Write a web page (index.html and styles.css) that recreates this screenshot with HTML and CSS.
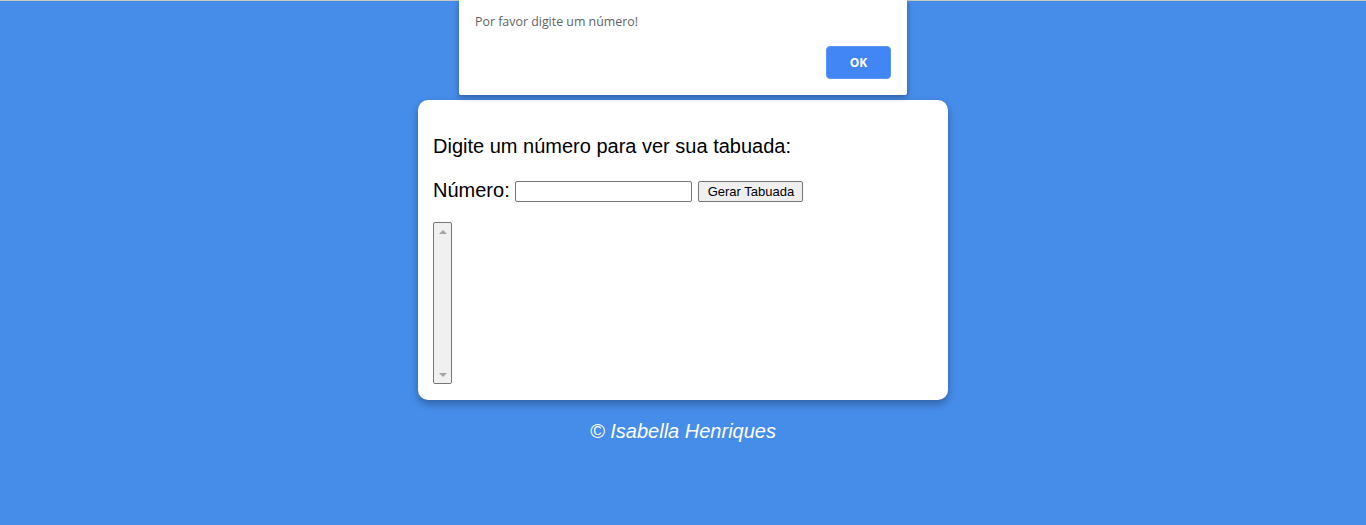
FILE: index.html
```html
<!DOCTYPE html>
<html lang="pt-BR">
<head>
<meta charset="utf-8">
<title>Tabuada</title>
<link rel="stylesheet" href="styles.css">
</head>
<body>
<div class="page">
  <main class="card">
    <p class="lead">Digite um número para ver sua tabuada:</p>
    <p class="row">Número: <input type="text" class="num"> <button class="gen">Gerar Tabuada</button></p>
    <div class="list">
      <span class="arrow up"></span>
      <span class="arrow down"></span>
    </div>
  </main>
  <footer class="foot">© Isabella Henriques</footer>
</div>
<div class="alert">
  <p class="msg">Por favor digite um número!</p>
  <div class="actions"><button class="ok">OK</button></div>
</div>
</body>
</html>
```
FILE: styles.css
```css
html, body { margin: 0; padding: 0; }
body {
  background: #468dea;
  border-top: 1px solid #c8c8c8;
  height: 524px;
  font-family: "Liberation Sans", Arial, sans-serif;
  overflow: hidden;
}
.page {
  display: flex;
  flex-direction: column;
  align-items: center;
  padding-top: 99px;
}
.card {
  box-sizing: border-box;
  width: 530px;
  background: #fff;
  border-radius: 10px;
  box-shadow: 0 4px 8px rgba(0,0,0,0.3);
  padding: 15px 15px 16px;
  height: 300px;
}
.lead {
  margin: 20px 0 0;
  font-size: 20px;
  line-height: 23px;
  color: #000;
}
.row {
  margin: 20px 0 0;
  font-size: 20px;
  line-height: 23px;
  color: #000;
  display: flex;
  align-items: center;
}
.num {
  box-sizing: border-box;
  width: 177px;
  height: 21px;
  margin: 3px 0 0 5px;
  border: 1px solid #767676;
  border-radius: 2px;
  padding: 1px 2px;
  font-size: 13px;
}
.gen {
  box-sizing: border-box;
  height: 21px;
  margin: 3px 0 0 6px;
  padding: 0 8px 0 9px;
  font-family: "Liberation Sans", Arial, sans-serif;
  font-size: 13px;
  color: #000;
  background: #efefef;
  border: 1px solid #767676;
  border-radius: 2px;
}
.list {
  box-sizing: border-box;
  margin-top: 20px;
  width: 19px;
  height: 162px;
  border: 1px solid #767676;
  border-radius: 2px;
  background: #f0f0f0;
  display: flex;
  flex-direction: column;
  justify-content: space-between;
  align-items: center;
  padding: 7px 0 6px;
}
.arrow {
  width: 0; height: 0;
  border-left: 4px solid transparent;
  border-right: 4px solid transparent;
}
.arrow.up { border-bottom: 4px solid #a3a3a3; }
.arrow.down { border-top: 4px solid #a3a3a3; }
.foot {
  margin-top: 20px;
  color: #fff;
  font-style: italic;
  font-size: 20px;
  line-height: 23px;
}
.alert {
  position: absolute;
  top: 0;
  left: 459px;
  width: 448px;
  height: 95px;
  box-sizing: border-box;
  background: #fff;
  border-radius: 0 0 2px 2px;
  box-shadow: 0 2px 6px rgba(0,0,0,0.35);
  padding: 14px 16px 0;
}
.msg {
  margin: 0;
  font-family: "Open Sans", "Noto Sans", sans-serif;
  font-size: 12.4px;
  line-height: 16px;
  color: #5f6368;
}
.actions {
  display: flex;
  justify-content: flex-end;
  margin-top: 16px;
}
.ok {
  width: 65px;
  height: 33px;
  background: #4285f4;
  border: 1px solid #5b97f5;
  border-radius: 4px;
  color: #fff;
  font-family: "Open Sans", "Noto Sans", sans-serif;
  font-weight: bold;
  font-size: 12px;
}
```
